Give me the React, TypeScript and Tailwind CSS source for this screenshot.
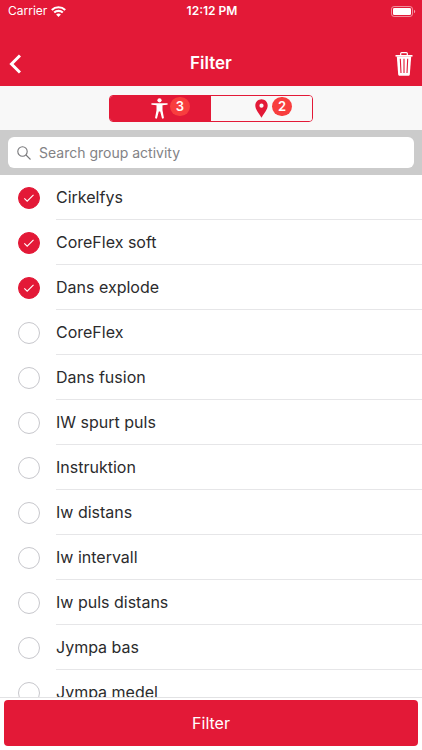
import React, { useState } from 'react'

interface Activity {
  id: string
  name: string
  selected: boolean
}

const initialActivities: Activity[] = [
  { id: 'cirkelfys', name: 'Cirkelfys', selected: true },
  { id: 'coreflex-soft', name: 'CoreFlex soft', selected: true },
  { id: 'dans-explode', name: 'Dans explode', selected: true },
  { id: 'coreflex', name: 'CoreFlex', selected: false },
  { id: 'dans-fusion', name: 'Dans fusion', selected: false },
  { id: 'iw-spurt-puls', name: 'IW spurt puls', selected: false },
  { id: 'instruktion', name: 'Instruktion', selected: false },
  { id: 'iw-distans', name: 'Iw distans', selected: false },
  { id: 'iw-intervall', name: 'Iw intervall', selected: false },
  { id: 'iw-puls-distans', name: 'Iw puls distans', selected: false },
  { id: 'jympa-bas', name: 'Jympa bas', selected: false },
  { id: 'jympa-medel', name: 'Jympa medel', selected: false }
]

const WifiIcon: React.FC = () => (
  <svg className="h-[11px] w-[15px]" viewBox="0 0 15 11" fill="none" stroke="currentColor" strokeWidth="2.1" aria-hidden="true">
    <path d="M0.8 3.9a9.6 9.6 0 0 1 13.4 0" />
    <path d="M3.2 6.6a6.2 6.2 0 0 1 8.6 0" />
    <path d="M7.5 10.9 5.1 8.6a3.4 3.4 0 0 1 4.8 0z" fill="currentColor" stroke="none" />
  </svg>
)

const BatteryIcon: React.FC = () => (
  <svg className="h-[11px] w-[25px]" viewBox="0 0 25 11" fill="none" aria-hidden="true">
    <rect x="0.5" y="0.5" width="21" height="10" rx="2.6" stroke="#fff" strokeOpacity="0.5" />
    <rect x="2" y="2" width="18" height="7" rx="1.3" fill="#fff" />
    <path d="M23 3.8c1.6.5 1.6 2.9 0 3.4z" fill="#fff" fillOpacity="0.6" />
  </svg>
)

const BackIcon: React.FC = () => (
  <svg className="h-5 w-3" viewBox="0 0 12 20" fill="none" stroke="currentColor" strokeWidth="3" aria-hidden="true">
    <path d="M11 1.5 2.500 10l8.500 8.500" />
  </svg>
)

const TrashIcon: React.FC = () => (
  <svg className="h-6 w-[18px]" viewBox="0 0 18 24" fill="none" aria-hidden="true">
    <path d="M5.7 3.2V1.6c0-.5.4-.9.9-.9h4.8c.5 0 .9.4.9.9v1.6" stroke="#fff" strokeWidth="1.2" />
    <path d="M.5 3h17v1.6H.5z" fill="#fff" />
    <path d="M1.8 4.6h14.4l-1.4 17.8c-.1.8-.7 1.4-1.5 1.4H4.7c-.8 0-1.4-.6-1.5-1.4z" fill="#fff" />
    <path d="M5.3 6.8 6 21M9 6.8V21M12.7 6.8 12 21" stroke="#e31937" strokeWidth="1.1" />
  </svg>
)

const PersonIcon: React.FC = () => (
  <svg className="h-[21px] w-[17px]" viewBox="0 0 17 21" fill="currentColor" aria-hidden="true">
    <circle cx="8.5" cy="2.3" r="2.1" />
    <path d="M1 5.2h15c.5 0 .8.3.8.7s-.3.7-.8.8l-4.5.6v5l1.4 7.5c.1.9-1.7 1.2-2 .3L9.2 13.5H7.8L6.1 20.1c-.3.9-2.1.6-2-.3l1.400-7.500v-5L1 6.700c-.5-.1-.8-.4-.8-.8s.3-.7.8-.7z" />
  </svg>
)

const PinIcon: React.FC = () => (
  <svg className="h-[19px] w-[13px]" viewBox="0 0 13 19" fill="currentColor" aria-hidden="true">
    <path
      fillRule="evenodd"
      d="M6.5.3c3.4 0 6.2 2.8 6.2 6.3 0 3.7-2.9 6.7-6.2 12.2C3.2 13.3.3 10.3.3 6.6.3 3.1 3.1.3 6.5.3zm0 4.300a2.100 2.100 0 1 0 0 4.200 2.100 2.100 0 0 0 0-4.200z"
    />
  </svg>
)

const SearchIcon: React.FC = () => (
  <svg className="h-[14px] w-[14px] shrink-0" viewBox="0 0 14 14" fill="none" stroke="#77777a" strokeWidth="1.1" aria-hidden="true">
    <circle cx="5.5" cy="5.5" r="4.7" />
    <path d="m9 9 4.5 4.5" />
  </svg>
)

const Badge: React.FC<{ count: number }> = ({ count }) => (
  <span className="flex h-[19px] w-5 items-center justify-center rounded-full bg-[#f83e3e] pt-0.5 text-[13px] font-semibold text-white">
    {count}
  </span>
)

const StatusBar: React.FC = () => (
  <div className="grid h-5 grid-cols-3 items-center pt-0.5 pr-1.5 pl-2 text-xs">
    <div className="flex items-center gap-1">
      <span>Carrier</span>
      <WifiIcon />
    </div>
    <span className="text-center font-semibold">12:12 PM</span>
    <div className="flex justify-end">
      <BatteryIcon />
    </div>
  </div>
)

interface ActivityRowProps {
  activity: Activity
  onToggle: (id: string) => void
}

const ActivityRow: React.FC<ActivityRowProps> = ({ activity, onToggle }) => (
  <li className="flex h-[45px] items-stretch pl-[18px]">
    <span className="grid w-[38px] shrink-0 items-center">
      <input
        id={activity.id}
        type="checkbox"
        checked={activity.selected}
        onChange={() => onToggle(activity.id)}
        className="col-start-1 row-start-1 h-[22px] w-[22px] appearance-none rounded-full border border-[#c7c7cc] bg-white checked:border-[#e31937] checked:bg-[#e31937]"
      />
      {activity.selected && (
        <svg
          className="pointer-events-none col-start-1 row-start-1 h-[22px] w-[22px]"
          viewBox="0 0 22 22"
          fill="none"
          stroke="#fff"
          strokeWidth="1.1"
          aria-hidden="true"
        >
          <path d="m6.3 11.3 2.9 2.9 6.3-6.4" />
        </svg>
      )}
    </span>
    <label
      htmlFor={activity.id}
      className="flex flex-1 items-center border-b border-[#e6e6e8] text-base text-[#2b2b2d]"
    >
      {activity.name}
    </label>
  </li>
)

const App: React.FC = () => {
  const [activities, setActivities] = useState(initialActivities)
  const [tab, setTab] = useState<'activity' | 'location'>('activity')
  const [query, setQuery] = useState('')

  const toggle = (id: string) => {
    setActivities((items) => items.map((item) => (item.id === id ? { ...item, selected: !item.selected } : item)))
  }

  const visible = activities.filter((item) => item.name.toLowerCase().includes(query.toLowerCase()))

  const getTabClasses = (active: boolean) =>
    active ? 'bg-[#e31937] text-white' : 'bg-[#f8f8f8] text-[#e31937]'

  return (
    <div className="flex h-screen flex-col overflow-hidden bg-white font-['Inter','Liberation_Sans',sans-serif]">
      <header className="shrink-0 bg-[#e31937] text-white">
        <StatusBar />
        <div className="grid h-[66px] grid-cols-3 items-center px-[9px] pt-[22px]">
          <button type="button" aria-label="Back" className="justify-self-start">
            <BackIcon />
          </button>
          <h1 className="text-center text-[17px] font-semibold">Filter</h1>
          <button type="button" aria-label="Clear filter" className="justify-self-end">
            <TrashIcon />
          </button>
        </div>
      </header>

      <div className="flex h-11 shrink-0 items-center justify-center bg-[#f8f8f8]">
        <div className="grid h-[27px] w-[204px] grid-cols-2 overflow-hidden rounded-[4px] border border-[#e31937]">
          <button
            type="button"
            aria-label="Group activities"
            aria-pressed={tab === 'activity'}
            onClick={() => setTab('activity')}
            className={`flex justify-center gap-0.5 pl-5 ${getTabClasses(tab === 'activity')}`}
          >
            <span className="pt-0.5">
              <PersonIcon />
            </span>
            <span className="pt-px">
              <Badge count={3} />
            </span>
          </button>
          <button
            type="button"
            aria-label="Locations"
            aria-pressed={tab === 'location'}
            onClick={() => setTab('location')}
            className={`flex justify-center gap-1 pl-6 ${getTabClasses(tab === 'location')}`}
          >
            <span className="pt-[3px]">
              <PinIcon />
            </span>
            <span className="pt-px">
              <Badge count={2} />
            </span>
          </button>
        </div>
      </div>

      <div className="shrink-0 bg-[#cbcbcb] px-2 py-[7px]">
        <label className="flex h-[31px] items-center gap-2 rounded-md bg-white px-[9px]">
          <SearchIcon />
          <input
            type="search"
            aria-label="Search group activity"
            placeholder="Search group activity"
            value={query}
            onChange={(e) => setQuery(e.target.value)}
            className="min-w-0 flex-1 bg-transparent text-sm text-[#2b2b2d] outline-none placeholder:text-[#828285]"
          />
        </label>
      </div>

      <ul className="min-h-0 flex-1 overflow-x-hidden overflow-y-auto [scrollbar-width:none]">
        {visible.map((activity) => (
          <ActivityRow key={activity.id} activity={activity} onToggle={toggle} />
        ))}
      </ul>

      <footer className="shrink-0 border-t border-[#e2e2e4] px-1 pt-0.5 pb-1">
        <button type="button" className="h-[46px] w-full rounded-[4px] bg-[#e31937] text-base text-white">
          Filter
        </button>
      </footer>
    </div>
  )
}

export default App
